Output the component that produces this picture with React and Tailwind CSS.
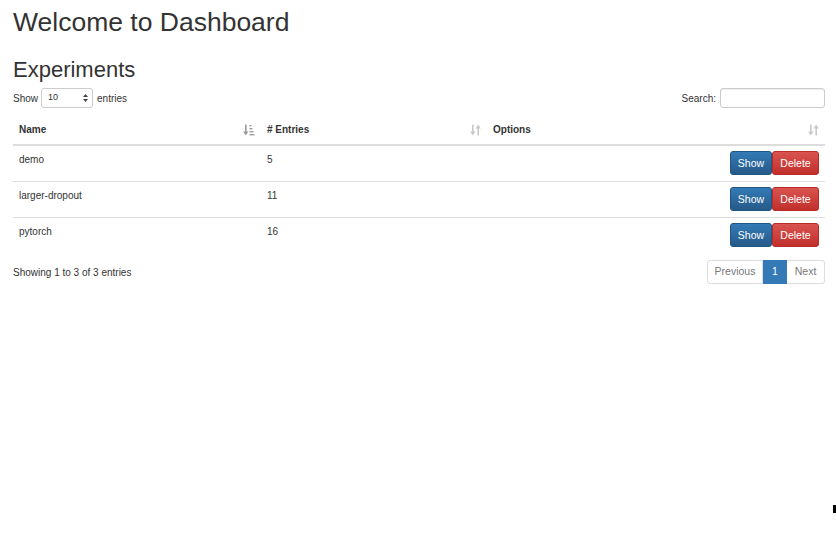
const ROWS = [
  { name: "demo", entries: 5 },
  { name: "larger-dropout", entries: 11 },
  { name: "pytorch", entries: 16 },
];

function SortBoth() {
  return (
    <svg width="11" height="12" viewBox="0 0 11 12" className="text-[#c8c8c8]">
      <g fill="currentColor">
        <rect x="2" y="0.5" width="1.6" height="8" />
        <polygon points="0.2,7.5 5.4,7.5 2.8,11.5" />
        <rect x="7.4" y="3.5" width="1.6" height="8" />
        <polygon points="5.6,4.5 10.8,4.5 8.2,0.5" />
      </g>
    </svg>
  );
}

function SortAsc() {
  return (
    <svg width="12" height="12" viewBox="0 0 12 12" className="text-[#9a9a9a]">
      <g fill="currentColor">
        <rect x="2" y="0.5" width="1.6" height="8" />
        <polygon points="0.2,7.5 5.4,7.5 2.8,11.5" />
        <rect x="6.5" y="1" width="2" height="1.4" />
        <rect x="6.5" y="4" width="3" height="1.4" />
        <rect x="6.5" y="7" width="4" height="1.4" />
        <rect x="6.5" y="10" width="5" height="1.4" />
      </g>
    </svg>
  );
}

function Btn({ kind, children }) {
  const cls =
    kind === "show"
      ? "bg-gradient-to-b from-[#337ab7] to-[#265a88] border-[#245580] w-[42px]"
      : "bg-gradient-to-b from-[#d9534f] to-[#c12e2a] border-[#b92c28] w-[47px]";
  return (
    <button
      className={`${cls} h-[24px] border rounded-[3px] text-white text-[10.5px] leading-none flex items-center justify-center`}
    >
      {children}
    </button>
  );
}

export default function App() {
  return (
    <div className="relative min-h-[540px] bg-white pl-[13px] pr-[11px] text-[#333] font-['Liberation_Sans',Arial,sans-serif] text-[10px]">
      <h1 className="pt-[7px] text-[26.5px] leading-[30px] font-normal">Welcome to Dashboard</h1>
      <h2 className="mt-[20px] text-[22px] leading-[25px] font-normal">Experiments</h2>

      <div className="mt-[6px] flex items-center justify-between h-[20px]">
        <div className="flex items-center">
          <span>Show</span>
          <div className="ml-[3px] mr-[4px] w-[52px] h-[20px] border border-[#ccc] rounded-[3px] flex items-center justify-between pl-[6px] pr-[4px] text-[9px]">
            <span>10</span>
            <svg width="5" height="8" viewBox="0 0 5 8">
              <polygon points="0,3 5,3 2.5,0" fill="#444" />
              <polygon points="0,5 5,5 2.5,8" fill="#444" />
            </svg>
          </div>
          <span>entries</span>
        </div>
        <div className="flex items-center">
          <span>Search:</span>
          <div className="ml-[4px] w-[105px] h-[20px] border border-[#ccc] rounded-[3px] shadow-[inset_0_1px_1px_rgba(0,0,0,0.075)]" />
        </div>
      </div>

      <table className="mt-[8px] w-full border-collapse table-fixed">
        <thead>
          <tr className="border-b-2 border-[#ddd]">
            <th className="w-[248px] text-left font-bold px-[6px] pt-[6px] pb-[7px] leading-[15px]">
              <div className="flex items-center justify-between">
                <span>Name</span>
                <SortAsc />
              </div>
            </th>
            <th className="w-[226px] text-left font-bold px-[6px] pt-[6px] pb-[7px] leading-[15px]">
              <div className="flex items-center justify-between">
                <span># Entries</span>
                <SortBoth />
              </div>
            </th>
            <th className="text-left font-bold px-[6px] pt-[6px] pb-[7px] leading-[15px]">
              <div className="flex items-center justify-between">
                <span>Options</span>
                <SortBoth />
              </div>
            </th>
          </tr>
        </thead>
        <tbody>
          {ROWS.map((r, i) => (
            <tr key={r.name} className={i > 0 ? "border-t border-[#ddd]" : ""}>
              <td className="align-top px-[6px] pt-[6px] leading-[15px]">{r.name}</td>
              <td className="align-top px-[6px] pt-[6px] leading-[15px]">{r.entries}</td>
              <td className="align-top px-[6px] pt-[5px] pb-[6px]">
                <div className="flex justify-end">
                  <Btn kind="show">Show</Btn>
                  <Btn kind="delete">Delete</Btn>
                </div>
              </td>
            </tr>
          ))}
        </tbody>
      </table>

      <div className="mt-[7px] flex items-center justify-between">
        <span>Showing 1 to 3 of 3 entries</span>
        <div className="flex h-[24px] text-[10.5px]">
          <span className="w-[56px] flex items-center justify-center border border-[#ddd] rounded-l-[3px] text-[#777]">
            Previous
          </span>
          <span className="w-[24px] flex items-center justify-center bg-[#337ab7] border border-[#337ab7] text-white">
            1
          </span>
          <span className="w-[38px] flex items-center justify-center border border-[#ddd] border-l-0 rounded-r-[3px] text-[#777]">
            Next
          </span>
        </div>
      </div>

      <div className="absolute left-[833px] top-[505px] w-[3px] h-[8px] bg-black" />
    </div>
  );
}
